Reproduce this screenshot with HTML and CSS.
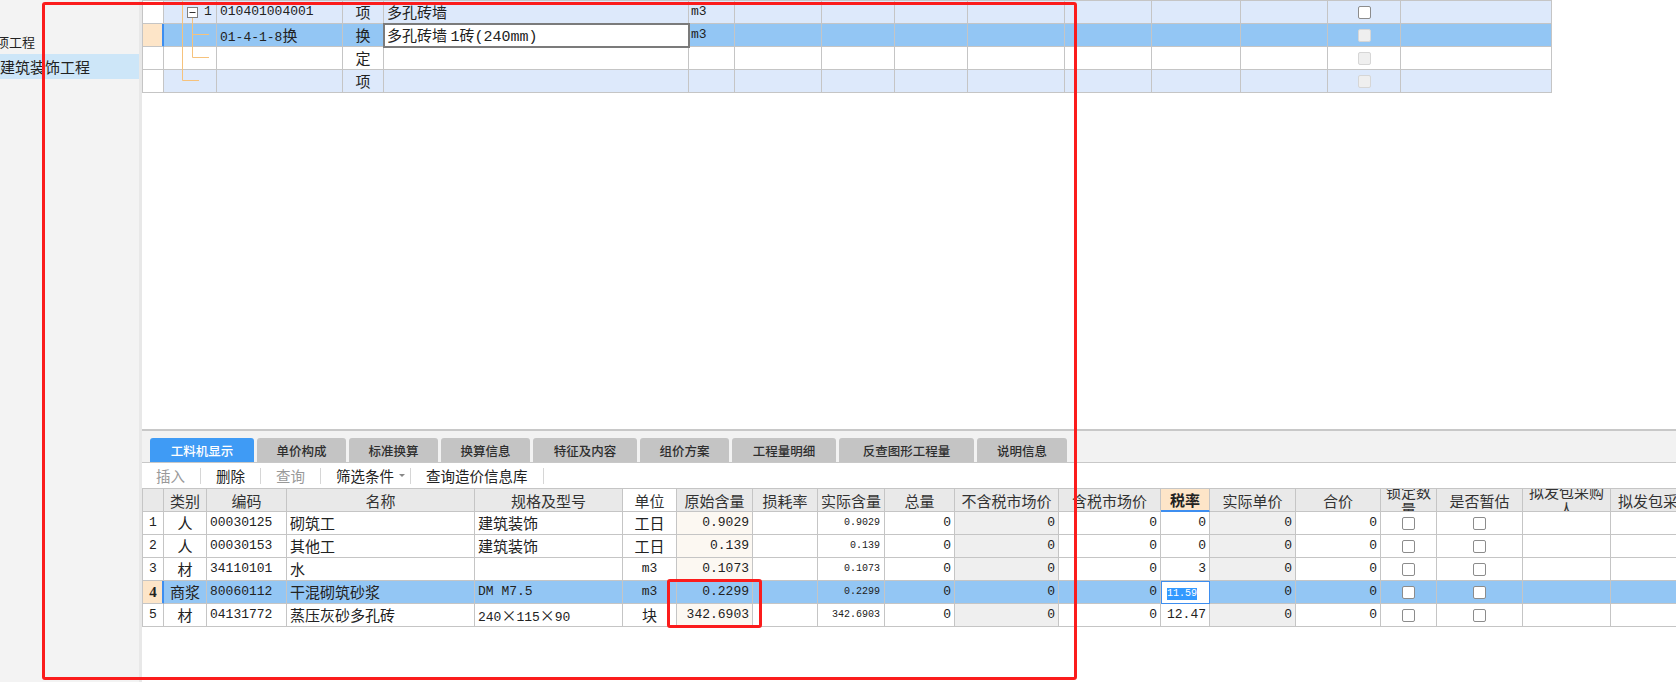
FILE: index.html
```html
<!DOCTYPE html>
<html lang="zh-CN">
<head>
<meta charset="utf-8">
<title>工料机显示</title>
<link rel="stylesheet" href="styles.css">
</head>
<body>
<div class="app">
  <aside class="side">
    <div class="side-item parent">项工程</div>
    <div class="side-item active">建筑装饰工程</div>
  </aside>
  <div class="split"></div>
  <main class="main">
    <section class="upper">
      <div class="grid tgrid">
        <svg class="tree-lines" width="80" height="92" viewBox="0 0 80 92">
          <path d="M39.5 0 V79.5 H56" fill="none" stroke="#f6c27c" stroke-width="1"/>
          <path d="M49.5 16.5 V56.5 H66 M49.5 33.5 H66" fill="none" stroke="#f6c27c" stroke-width="1"/>
          <rect x="44.5" y="6.5" width="10" height="10" fill="#fff" stroke="#7f7f7f" stroke-width="1"/>
          <path d="M46.5 11.5 H52.5" stroke="#333" stroke-width="1"/>
        </svg>
        <div class="row light">
          <div class="c rowhead"></div>
          <div class="c tree mono">1</div>
          <div class="c mono">010401004001</div>
          <div class="c ctr">项</div>
          <div class="c">多孔砖墙</div>
          <div class="c unit mono">m3</div>
          <div class="c"></div><div class="c"></div><div class="c"></div><div class="c"></div><div class="c"></div><div class="c"></div><div class="c"></div>
          <div class="c cbc"><span class="cb"></span></div>
          <div class="c"></div>
        </div>
        <div class="row sel">
          <div class="c rowhead"></div>
          <div class="c tree"></div>
          <div class="c"><span class="mono">01-4-1-8</span>换</div>
          <div class="c ctr">换</div>
          <div class="c edit-name">多孔砖墙 <span class="mono15">1</span>砖<span class="mono15">(240mm)</span></div>
          <div class="c unit mono">m3</div>
          <div class="c"></div><div class="c"></div><div class="c"></div><div class="c"></div><div class="c"></div><div class="c"></div><div class="c"></div>
          <div class="c cbc"><span class="cb off"></span></div>
          <div class="c"></div>
        </div>
        <div class="row">
          <div class="c rowhead"></div>
          <div class="c tree"></div>
          <div class="c"></div>
          <div class="c ctr">定</div>
          <div class="c"></div>
          <div class="c unit"></div>
          <div class="c"></div><div class="c"></div><div class="c"></div><div class="c"></div><div class="c"></div><div class="c"></div><div class="c"></div>
          <div class="c cbc"><span class="cb off"></span></div>
          <div class="c"></div>
        </div>
        <div class="row light">
          <div class="c rowhead"></div>
          <div class="c tree"></div>
          <div class="c"></div>
          <div class="c ctr">项</div>
          <div class="c"></div>
          <div class="c unit"></div>
          <div class="c"></div><div class="c"></div><div class="c"></div><div class="c"></div><div class="c"></div><div class="c"></div><div class="c"></div>
          <div class="c cbc"><span class="cb off"></span></div>
          <div class="c"></div>
        </div>
      </div>
    </section>

    <section class="lower">
      <nav class="tabstrip">
        <div class="tab active w104">工料机显示</div>
        <div class="tab w89">单价构成</div>
        <div class="tab w89">标准换算</div>
        <div class="tab w89">换算信息</div>
        <div class="tab w104">特征及内容</div>
        <div class="tab w89">组价方案</div>
        <div class="tab w104">工程量明细</div>
        <div class="tab w135">反查图形工程量</div>
        <div class="tab w90">说明信息</div>
      </nav>
      <div class="toolbar">
        <span class="tb dis">插入</span><i class="sep"></i>
        <span class="tb">删除</span><i class="sep"></i>
        <span class="tb dis">查询</span><i class="sep"></i>
        <span class="tb">筛选条件</span><span class="caret"></span><i class="sep near"></i>
        <span class="tb">查询造价信息库</span><i class="sep"></i>
      </div>
      <div class="grid bgrid">
        <div class="row head">
          <div class="h"></div>
          <div class="h">类别</div>
          <div class="h">编码</div>
          <div class="h">名称</div>
          <div class="h">规格及型号</div>
          <div class="h white">单位</div>
          <div class="h">原始含量</div>
          <div class="h">损耗率</div>
          <div class="h">实际含量</div>
          <div class="h">总量</div>
          <div class="h">不含税市场价</div>
          <div class="h">含税市场价</div>
          <div class="h tax">税率</div>
          <div class="h">实际单价</div>
          <div class="h">合价</div>
          <div class="h">锁定数量</div>
          <div class="h">是否暂估</div>
          <div class="h">拟发包采购人</div>
          <div class="h">拟发包采购方式</div>
        </div>

        <div class="row">
          <div class="c rowhead mono">1</div>
          <div class="c ctr">人</div>
          <div class="c mono">00030125</div>
          <div class="c">砌筑工</div>
          <div class="c">建筑装饰</div>
          <div class="c ctr">工日</div>
          <div class="c rt mono cream">0.9029</div>
          <div class="c"></div>
          <div class="c rt sm">0.9029</div>
          <div class="c rt mono">0</div>
          <div class="c rt mono gray">0</div>
          <div class="c rt mono">0</div>
          <div class="c rt mono">0</div>
          <div class="c rt mono gray">0</div>
          <div class="c rt mono">0</div>
          <div class="c cbc"><span class="cb"></span></div>
          <div class="c cbc"><span class="cb"></span></div>
          <div class="c"></div>
          <div class="c"></div>
        </div>
        <div class="row">
          <div class="c rowhead mono">2</div>
          <div class="c ctr">人</div>
          <div class="c mono">00030153</div>
          <div class="c">其他工</div>
          <div class="c">建筑装饰</div>
          <div class="c ctr">工日</div>
          <div class="c rt mono cream">0.139</div>
          <div class="c"></div>
          <div class="c rt sm">0.139</div>
          <div class="c rt mono">0</div>
          <div class="c rt mono gray">0</div>
          <div class="c rt mono">0</div>
          <div class="c rt mono">0</div>
          <div class="c rt mono gray">0</div>
          <div class="c rt mono">0</div>
          <div class="c cbc"><span class="cb"></span></div>
          <div class="c cbc"><span class="cb"></span></div>
          <div class="c"></div>
          <div class="c"></div>
        </div>
        <div class="row">
          <div class="c rowhead mono">3</div>
          <div class="c ctr">材</div>
          <div class="c mono">34110101</div>
          <div class="c">水</div>
          <div class="c"></div>
          <div class="c ctr mono">m3</div>
          <div class="c rt mono cream">0.1073</div>
          <div class="c"></div>
          <div class="c rt sm">0.1073</div>
          <div class="c rt mono">0</div>
          <div class="c rt mono gray">0</div>
          <div class="c rt mono">0</div>
          <div class="c rt mono">3</div>
          <div class="c rt mono gray">0</div>
          <div class="c rt mono">0</div>
          <div class="c cbc"><span class="cb"></span></div>
          <div class="c cbc"><span class="cb"></span></div>
          <div class="c"></div>
          <div class="c"></div>
        </div>
        <div class="row sel">
          <div class="c rowhead">4</div>
          <div class="c ctr">商浆</div>
          <div class="c mono">80060112</div>
          <div class="c">干混砌筑砂浆</div>
          <div class="c mono">DM M7.5</div>
          <div class="c ctr mono">m3</div>
          <div class="c rt mono cream">0.2299</div>
          <div class="c"></div>
          <div class="c rt sm">0.2299</div>
          <div class="c rt mono">0</div>
          <div class="c rt mono gray">0</div>
          <div class="c rt mono">0</div>
          <div class="c edit-tax"><span class="hl">11.59</span></div>
          <div class="c rt mono gray">0</div>
          <div class="c rt mono">0</div>
          <div class="c cbc"><span class="cb"></span></div>
          <div class="c cbc"><span class="cb"></span></div>
          <div class="c"></div>
          <div class="c"></div>
        </div>
        <div class="row">
          <div class="c rowhead mono">5</div>
          <div class="c ctr">材</div>
          <div class="c mono">04131772</div>
          <div class="c">蒸压灰砂多孔砖</div>
          <div class="c"><span class="mono">240</span><span class="x">×</span><span class="mono">115</span><span class="x">×</span><span class="mono">90</span></div>
          <div class="c ctr">块</div>
          <div class="c rt mono cream">342.6903</div>
          <div class="c"></div>
          <div class="c rt sm">342.6903</div>
          <div class="c rt mono">0</div>
          <div class="c rt mono gray">0</div>
          <div class="c rt mono">0</div>
          <div class="c rt mono">12.47</div>
          <div class="c rt mono gray">0</div>
          <div class="c rt mono">0</div>
          <div class="c cbc"><span class="cb"></span></div>
          <div class="c cbc"><span class="cb"></span></div>
          <div class="c"></div>
          <div class="c"></div>
        </div>
      </div>
    </section>
  </main>

  <div class="mark mark-a"></div>
  <div class="mark mark-b"></div>
</div>
</body>
</html>
```

FILE: styles.css
```css
* { box-sizing: border-box; }

html, body { margin: 0; padding: 0; }

body {
  width: 1676px;
  height: 682px;
  overflow: hidden;
  background: #fff;
  color: #222;
  font-family: "Noto Sans CJK SC", "Noto Sans", sans-serif;
  font-size: 15px;
}

.app {
  position: relative;
  display: flex;
  height: 682px;
}

/* left tree panel */
.side {
  flex: none;
  width: 139px;
  background: #f3f3f3;
  padding-top: 29px;
  overflow: hidden;
}

.side-item {
  height: 25px;
  line-height: 25px;
  white-space: nowrap;
}

.side-item.parent {
  font-size: 13px;
  text-indent: -4px;
}

.side-item.active {
  background: #cde6f8;
}

.split {
  flex: none;
  width: 3px;
  background: #e8e8e8;
}

.main {
  flex: 1;
  min-width: 0;
  display: flex;
  flex-direction: column;
  overflow: hidden;
}

.upper {
  flex: none;
  height: 429px;
}

/* grids */
.grid {
  position: relative;
  border-top: 1px solid #c5c5c5;
  border-left: 1px solid #c5c5c5;
}

.row {
  display: grid;
  grid-template-columns: var(--cols);
}

.tgrid {
  width: 1410px;
  --cols: 21px 53px 126px 41px 305px 46px 87px 73px 73px 97px 87px 89px 87px 73px 151px;
}

.bgrid {
  --cols: 21px 43px 80px 188px 148px 54px 76px 65px 67px 70px 104px 102px 49px 86px 85px 56px 86px 88px 120px;
  width: 1568px;
}

.c, .h {
  height: 23px;
  border-right: 1px solid #c5c5c5;
  border-bottom: 1px solid #c5c5c5;
  padding: 0 3px;
  line-height: 22px;
  white-space: nowrap;
  overflow: hidden;
}

.ctr { text-align: center; }
.rt { text-align: right; }

.mono {
  font-family: "Liberation Mono", "Noto Sans CJK SC", monospace;
  font-size: 13px;
}

.mono15 {
  font-family: "Liberation Mono", monospace;
  font-size: 15px;
}

.sm {
  font-family: "Liberation Mono", monospace;
  font-size: 10px;
  padding-right: 4px;
}

.x {
  display: inline-block;
  width: 15px;
  text-align: center;
}

.rowhead {
  padding: 0;
  text-align: center;
  background: #fff;
}

.tree { padding-left: 40px; }
.unit { padding-left: 2px; }

.cream { background: #fcf8f2; }
.gray { background: #efefef; }

.row.light > .c { background: #dde9fb; }
.row.light > .c.rowhead { background: #fff; }

.row.sel > .c { background: #93c6f4; }

.row.sel > .c.rowhead {
  background: #fde5c8;
  border-right-color: #3d8ef0;
  box-shadow: inset -1px 0 #3d8ef0;
  font-family: "Liberation Serif", serif;
  font-weight: bold;
  font-size: 15px;
}

.row.sel > .c.edit-name {
  position: relative;
  z-index: 1;
  background: #fff;
  outline: 2px solid #7b7b7b;
  outline-offset: -1px;
}

.row.sel > .c.edit-tax {
  background: #fff;
  outline: 1px solid #3d8ef0;
  outline-offset: -1px;
  padding: 3px 0 0 6px;
  line-height: 12px;
}

.hl {
  display: inline-block;
  background: #3399ff;
  color: #fff;
  font-family: "Liberation Mono", monospace;
  font-size: 10px;
  line-height: 12px;
}

.cbc {
  display: flex;
  align-items: center;
  justify-content: center;
}

.cb {
  display: block;
  width: 13px;
  height: 13px;
  border: 1px solid #8c8c8c;
  border-radius: 2px;
  background: #fff;
}

.cb.off {
  background: #efefef;
  border-color: #d6d6d6;
}

.tree-lines {
  position: absolute;
  left: 0;
  top: 0;
  pointer-events: none;
  z-index: 2;
}

/* header of bottom grid */
.h {
  display: flex;
  align-items: center;
  justify-content: center;
  text-align: center;
  white-space: normal;
  line-height: 17px;
  background: #e9e9e9;
  color: #333;
}

.h.white { background: #fff; }

.h.tax {
  background: #fde5c8;
  font-weight: bold;
  color: #222;
  border-bottom: 2px solid #3d8ef0;
}

/* lower section */
.lower {
  flex: 1;
  display: flex;
  flex-direction: column;
}

.tabstrip {
  height: 34px;
  flex: none;
  display: flex;
  align-items: flex-end;
  gap: 3px;
  padding-left: 8px;
  background: #f2f2f2;
  border-top: 2px solid #c8c8c8;
  border-bottom: 1px solid #c8c8c8;
}

.tab {
  height: 24px;
  display: flex;
  align-items: center;
  justify-content: center;
  border-radius: 3px 3px 0 0;
  background: #c4c4c4;
  color: #2e2e2e;
  font-size: 12.5px;
  font-weight: 500;
}

.tab.active {
  background: #3f9bf5;
  color: #fff;
}

.w89 { width: 89px; }
.w90 { width: 90px; }
.w104 { width: 104px; }
.w135 { width: 135px; }

.toolbar {
  height: 25px;
  flex: none;
  display: flex;
  align-items: center;
  padding-left: 14px;
  font-size: 14.5px;
}

.tb { color: #222; line-height: 20px; }
.tb.dis { color: #999; }

.sep {
  display: block;
  width: 1px;
  height: 16px;
  background: #d6d6d6;
  margin: 0 15px;
}

.sep.near { margin-left: 5px; }

.caret {
  display: block;
  width: 0;
  height: 0;
  margin-left: 5px;
  border-top: 3px solid #888;
  border-left: 3px solid transparent;
  border-right: 3px solid transparent;
}

/* red annotation rectangles */
.mark {
  position: absolute;
  border: 3px solid #fb1c1c;
  border-radius: 3px;
  pointer-events: none;
  z-index: 5;
}

.mark-a {
  left: 42px;
  top: 2px;
  width: 1035px;
  height: 678px;
}

.mark-b {
  left: 667px;
  top: 579px;
  width: 95px;
  height: 49px;
}
```
